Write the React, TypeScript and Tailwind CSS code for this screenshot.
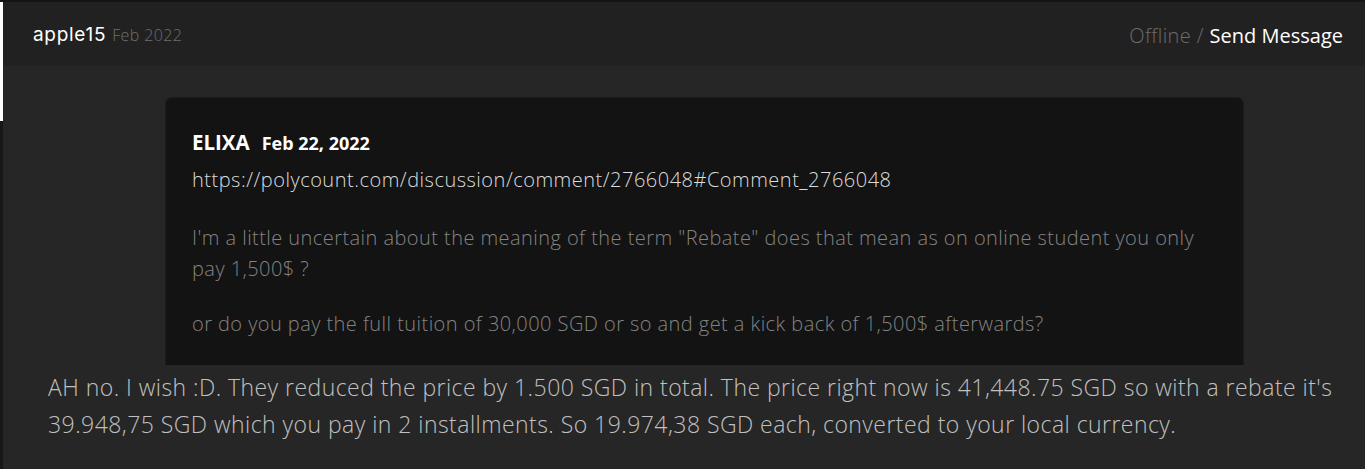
export default function App() {
	return (
		<div className="h-[469px] w-full overflow-hidden bg-[#141414] pt-[2px] font-['Open_Sans',sans-serif]">
			<div className="flex h-full">
				<div className="w-[3px] shrink-0 bg-[#171717]">
					<div className="h-[119px] bg-white" />
				</div>
				<div className="flex-1 flex flex-col bg-[#262626]">
					<header className="h-[64px] shrink-0 bg-[#212121] flex items-center pl-[30px] pr-[22px]">
						<div className="flex items-baseline gap-[6px] pt-[3px]">
							<span className="text-[19px] text-white font-['Inter',sans-serif] tracking-[0.7px]">apple15</span>
							<span className="text-[16px] font-light tracking-[0.4px] text-[#6f6f6f]">Feb 2022</span>
						</div>
						<div className="ml-auto text-[20px] pt-[3px] font-light">
							<span className="text-[#6b6b6b] tracking-[0.4px]">Offline / </span>
							<span className="text-white font-normal">Send Message</span>
						</div>
					</header>
					<main className="flex-1">
						<div className="ml-[162px] mr-[121px] mt-[31px] h-[268px] overflow-hidden rounded-t-[7px] border border-b-0 border-[#1c1c1c] bg-[#131313] px-[26px] pt-[29px]">
							<div className="flex items-baseline gap-[12px]">
								<span className="text-[20.5px] font-bold text-white">ELIXA</span>
								<span className="text-[18px] font-bold text-white">Feb 22, 2022</span>
							</div>
							<p className="mt-[7px] text-[20px] font-light tracking-[0.5px] text-[#dcdcdc]">https://polycount.com/discussion/comment/2766048#Comment_2766048</p>
							<div className="tracking-[0.44px] text-[20px] leading-[31px] font-light text-[#838383]">
								<p className="mt-[27px]">
									I'm a little uncertain about the meaning of the term "Rebate" does that mean as on online student you only pay 1,500$ ?
								</p>
								<p className="mt-[24px]">
									or do you pay the full tuition of 30,000 SGD or so and get a kick back of 1,500$ afterwards?
								</p>
							</div>
						</div>
						<p className="pl-[45px] pr-[20px] pt-[4px] text-[23px] leading-[37px] font-light tracking-[0.45px] text-[#c0c0c0]">
							AH no. I wish :D. They reduced the price by 1.500 SGD in total. The price right now is 41,448.75 SGD so with a rebate it's 39.948,75 SGD which you pay in 2 installments. So 19.974,38 SGD each, converted to your local currency.
						</p>
					</main>
				</div>
			</div>
		</div>
	);
}
